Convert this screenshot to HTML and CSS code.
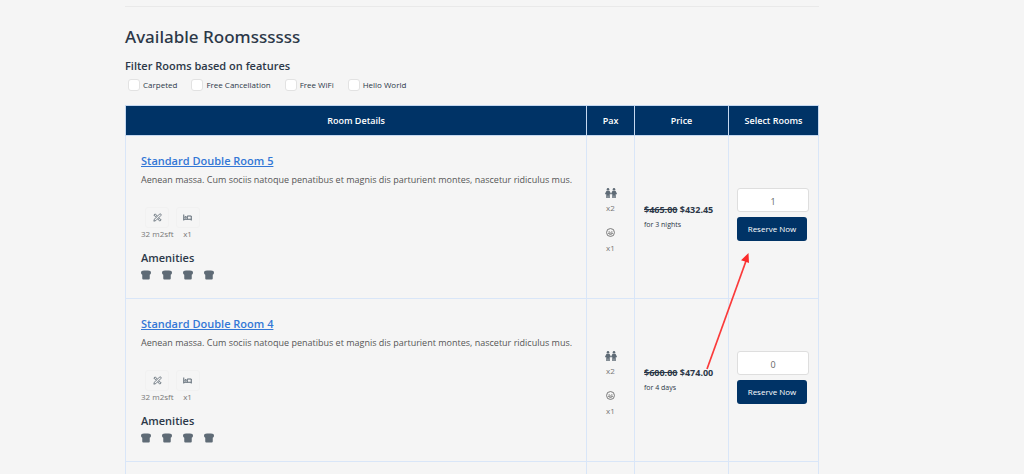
FILE: index.html
```html
<!DOCTYPE html>
<html lang="en">
<head>
    <meta charset="UTF-8">
    <title>Available Rooms</title>
    <link rel="stylesheet" href="styles.css">
</head>
<body>
    <!-- icons -->
    <svg class="sprite" aria-hidden="true">
        <symbol id="icon-size" viewBox="0 0 16 16">
            <g fill="none" stroke="currentColor" stroke-width="1.5">
                <path d="M1.500 14.500 2.500 11 11.500 2q1.500-1 2.500 0t0 2.500L5 13.500z"/>
                <path d="M6 7 1.500 4 4 1.500 7.500 5.500M10 9l4.500 3-2.500 2.500L8.500 10.500"/>
            </g>
        </symbol>
        <symbol id="icon-bed" viewBox="0 0 18 14">
            <g fill="none" stroke="currentColor" stroke-width="2">
                <path d="M1.500 1v12M1.500 10.500h15M16.500 13V4H8.500v6.500"/>
                <circle cx="5" cy="6.500" r="1.500"/>
            </g>
        </symbol>
        <symbol id="icon-bread" viewBox="0 0 20 18">
            <path fill="currentColor" d="M6 0h8q6 0 6 4.500 0 3-2.500 4V16q0 2-2 2H4.500q-2 0-2-2V8.500Q0 7.500 0 4.500 0 0 6 0z"/>
        </symbol>
        <symbol id="icon-adults" viewBox="0 0 24 20">
            <g fill="currentColor">
                <circle cx="6" cy="2.500" r="2.500"/>
                <path d="M3 5.500h6l3 6-1.500 1.500L9.500 12v8H6.500v-5h-1v5h-3v-8l-1 1L0 11.500z"/>
                <circle cx="18" cy="2.500" r="2.500"/>
                <path d="M15 5.500h6l3 6-1.500 1.500-1-1v8h-3v-5h-1v5h-3v-8l-1 1-1.500-1.500z"/>
            </g>
        </symbol>
        <symbol id="icon-child" viewBox="0 0 18 18">
            <g fill="none" stroke="currentColor" stroke-width="1.700">
                <circle cx="9" cy="9" r="7.900"/>
                <path d="M4.800 10q4.200 6.500 8.400 0z"/>
                <path d="M5.500 7h1.500M11 7h1.500"/>
            </g>
        </symbol>
    </svg>

    <div class="container">
        <hr class="divider">
        <h1>Available Roomssssss</h1>
        <h2>Filter Rooms based on features</h2>
        <form class="filters">
            <label><input type="checkbox" name="carpeted">Carpeted</label>
            <label><input type="checkbox" name="cancellation">Free Cancellation</label>
            <label><input type="checkbox" name="wifi">Free WiFi</label>
            <label><input type="checkbox" name="hello">Hello World</label>
        </form>

        <div class="table-wrap">
            <table class="rooms">
                <colgroup>
                    <col class="col-details">
                    <col class="col-pax">
                    <col class="col-price">
                    <col class="col-select">
                </colgroup>
                <thead>
                    <tr>
                        <th>Room Details</th>
                        <th>Pax</th>
                        <th>Price</th>
                        <th>Select Rooms</th>
                    </tr>
                </thead>
                <tbody>
                    <tr>
                        <td class="details">
                            <h3><a href="#">Standard Double Room 5</a></h3>
                            <p class="description">Aenean massa. Cum sociis natoque penatibus et magnis dis parturient montes, nascetur ridiculus mus.</p>
                            <div class="specs">
                                <div class="spec"><span class="spec-icon"><svg class="icon"><use href="#icon-size"/></svg></span>32 m2sft</div>
                                <div class="spec"><span class="spec-icon"><svg class="icon"><use href="#icon-bed"/></svg></span>x1</div>
                            </div>
                            <h4>Amenities</h4>
                            <div class="amenities">
                                <svg><use href="#icon-bread"/></svg>
                                <svg><use href="#icon-bread"/></svg>
                                <svg><use href="#icon-bread"/></svg>
                                <svg><use href="#icon-bread"/></svg>
                            </div>
                        </td>
                        <td class="pax">
                            <svg class="adults"><use href="#icon-adults"/></svg>
                            <span>x2</span>
                            <svg class="child"><use href="#icon-child"/></svg>
                            <span>x1</span>
                        </td>
                        <td class="price">
                            <strong><del>$465.00</del> $432.45</strong>
                            <small>for 3 nights</small>
                        </td>
                        <td class="select">
                            <input type="text" value="1" aria-label="Number of rooms">
                            <button type="button">Reserve Now</button>
                        </td>
                    </tr>
                    <tr>
                        <td class="details">
                            <h3><a href="#">Standard Double Room 4</a></h3>
                            <p class="description">Aenean massa. Cum sociis natoque penatibus et magnis dis parturient montes, nascetur ridiculus mus.</p>
                            <div class="specs">
                                <div class="spec"><span class="spec-icon"><svg class="icon"><use href="#icon-size"/></svg></span>32 m2sft</div>
                                <div class="spec"><span class="spec-icon"><svg class="icon"><use href="#icon-bed"/></svg></span>x1</div>
                            </div>
                            <h4>Amenities</h4>
                            <div class="amenities">
                                <svg><use href="#icon-bread"/></svg>
                                <svg><use href="#icon-bread"/></svg>
                                <svg><use href="#icon-bread"/></svg>
                                <svg><use href="#icon-bread"/></svg>
                            </div>
                        </td>
                        <td class="pax">
                            <svg class="adults"><use href="#icon-adults"/></svg>
                            <span>x2</span>
                            <svg class="child"><use href="#icon-child"/></svg>
                            <span>x1</span>
                        </td>
                        <td class="price">
                            <strong><del>$600.00</del> $474.00</strong>
                            <small>for 4 days</small>
                        </td>
                        <td class="select">
                            <input type="text" value="0" aria-label="Number of rooms">
                            <button type="button">Reserve Now</button>
                        </td>
                    </tr>
                    <tr class="next-row">
                        <td></td>
                        <td></td>
                        <td></td>
                        <td></td>
                    </tr>
                </tbody>
            </table>
            <!-- arrow pointing at the first reserve button -->
            <svg class="arrow" viewBox="0 0 46 120" aria-hidden="true">
                <path d="M2 117 41 9" fill="none" stroke="#fb3a3a" stroke-width="1.700"/>
                <path d="M43.500 1 44 11l-4-1.500-4-1.200z" fill="#fb2a2a"/>
            </svg>
        </div>
    </div>
</body>
</html>
```
FILE: styles.css
```css
* {
    box-sizing: border-box;
}
body {
    margin: 0;
    background-color: #f5f5f5;
    color: #2c3848;
    font-family: "Open Sans", "Noto Sans", sans-serif;
    font-size: 9px;
}
h1, h2, h3, h4, p {
    margin: 0;
}
.sprite {
    display: none;
}
.container {
    margin-left: 125px;
    margin-right: 205px;
    padding-top: 6px;
}
.divider {
    margin: 0 0 18px;
    border: 0;
    border-top: 1px solid #e9e9e9;
}
h1 {
    font-family: "Noto Sans", "Open Sans", sans-serif;
    font-size: 17px;
    font-weight: 500;
    line-height: 24px;
}
h2 {
    margin-top: 7px;
    font-size: 11px;
    font-weight: 600;
    line-height: 20px;
}
.filters {
    display: flex;
    gap: 14px;
    padding-left: 3px;
    margin-top: 1px;
    margin-bottom: 13px;
}
.filters label {
    display: flex;
    align-items: center;
    gap: 3px;
    font-size: 8px;
    line-height: 12px;
    height: 15px;
}
.filters input {
    appearance: none;
    width: 12px;
    height: 12px;
    margin: 0;
    background-color: #fff;
    border: 1px solid #e2e2e2;
    border-radius: 3px;
}

/* rooms table */
.table-wrap {
    position: relative;
}
.rooms {
    width: 100%;
    table-layout: fixed;
    border-collapse: collapse;
}
.col-pax {
    width: 48px;
}
.col-price {
    width: 94px;
}
.col-select {
    width: 90px;
}
.rooms th {
    height: 30px;
    padding: 0;
    background-color: #003366;
    border: 1px solid #c5d8f0;
    color: #fff;
    font-size: 9px;
    font-weight: 600;
}
.rooms td {
    padding: 0;
    border: 1px solid #d9e6f8;
}
.rooms .details {
    padding: 14px 5px 18px 15px;
}
h3 {
    font-size: 11px;
    font-weight: 600;
    line-height: 22px;
}
h3 a {
    color: #3377d6;
}
.description {
    color: #555;
    font-size: 9px;
    line-height: 16px;
}
.specs {
    display: flex;
    gap: 2px;
    margin-top: 19px;
}
.spec {
    display: flex;
    flex-direction: column;
    align-items: center;
    color: #777;
    font-size: 8px;
    line-height: 12px;
}
.spec-icon {
    display: flex;
    align-items: center;
    justify-content: center;
    width: 24px;
    height: 21px;
    border: 1px solid #f1f1f1;
    border-radius: 3px;
}
.icon {
    width: 9px;
    height: 9px;
    color: #5f6b76;
}
h4 {
    margin-top: 8px;
    font-size: 11px;
    font-weight: 600;
    line-height: 20px;
}
.amenities {
    display: flex;
    gap: 11px;
    margin-top: 2px;
}
.amenities svg {
    width: 10px;
    height: 10px;
    color: #5f6b76;
}
.rooms .pax {
    padding-top: 8px;
    color: #777;
    font-size: 8px;
    line-height: 12px;
    text-align: center;
}
.pax svg, .pax span {
    display: block;
    margin: 0 auto;
}
.pax .adults {
    width: 12px;
    height: 10px;
    margin-bottom: 4px;
    color: #5f6b76;
}
.pax .child {
    width: 9px;
    height: 9px;
    margin-top: 14px;
    margin-bottom: 5px;
    color: #666;
}
.rooms .price {
    padding-left: 9px;
}
.price strong {
    display: block;
    font-size: 9px;
    line-height: 16px;
}
.price small {
    display: block;
    font-size: 7px;
    line-height: 14px;
}
.rooms .select {
    padding: 0 9px 6px 8px;
}
.select input {
    display: block;
    width: 100%;
    height: 24px;
    margin-bottom: 5px;
    padding: 3px 0 0;
    background-color: #fff;
    border: 1px solid #dedede;
    border-radius: 3px;
    color: #666;
    font-family: inherit;
    font-size: 9px;
    text-align: center;
}
.select button {
    display: block;
    width: 70px;
    height: 24px;
    padding: 0;
    background-color: #003366;
    border: 0;
    border-radius: 3px;
    color: #fff;
    font-family: inherit;
    font-size: 8px;
}
.rooms .next-row td {
    height: 12px;
    border-bottom: 0;
}
.arrow {
    position: absolute;
    top: 147px;
    right: 68px;
    width: 46px;
    height: 120px;
}
```
